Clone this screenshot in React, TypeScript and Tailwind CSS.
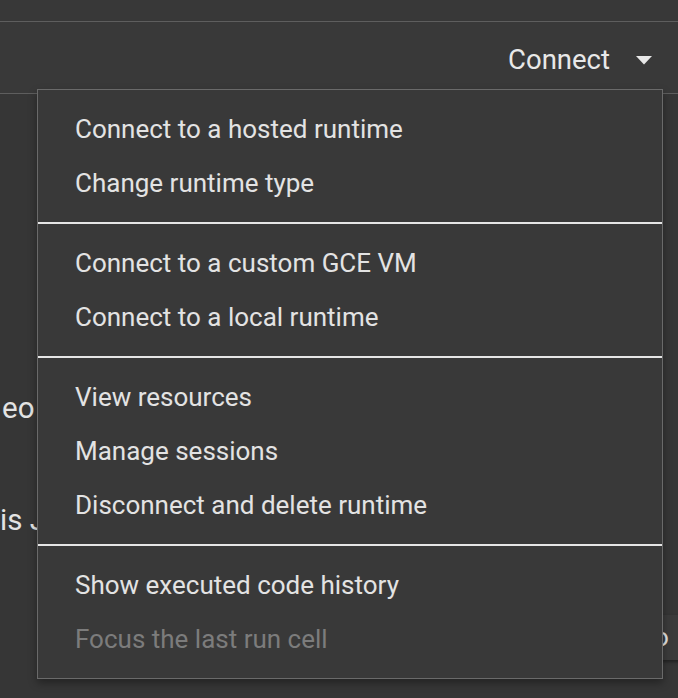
const groups: { label: string; disabled?: boolean }[][] = [
  [{ label: "Connect to a hosted runtime" }, { label: "Change runtime type" }],
  [{ label: "Connect to a custom GCE VM" }, { label: "Connect to a local runtime" }],
  [
    { label: "View resources" },
    { label: "Manage sessions" },
    { label: "Disconnect and delete runtime" },
  ],
  [
    { label: "Show executed code history" },
    { label: "Focus the last run cell", disabled: true },
  ],
];

function ConnectMenu() {
  return (
    <div className="absolute left-[37px] top-[89px] w-[626px] border-[1.5px] border-[#6a6a6a] bg-[#393939] shadow-[0_4px_8px_rgba(0,0,0,0.35)]">
      {groups.map((group, gi) => (
        <div key={gi}>
          {gi > 0 ? <div className="h-[2px] bg-[#e6e6e6]" /> : null}
          <div className="py-3">
            {group.map((item) => (
              <div
                key={item.label}
                className={
                  "flex h-[54px] items-center pl-[37px] text-[26px] " +
                  (item.disabled ? "text-[#7c7c7c]" : "text-[#e3e3e3]")
                }
              >
                {item.label}
              </div>
            ))}
          </div>
        </div>
      ))}
    </div>
  );
}

export default function App() {
  return (
    <div
      className="relative h-[698px] w-[678px] overflow-hidden bg-[#363636]"
      style={{ fontFamily: "Roboto, 'Liberation Sans', sans-serif" }}
    >
      <div className="h-[22px] border-b-[1.5px] border-[#5e5e5e] bg-[#383838]" />
      <div className="flex h-[72px] items-center justify-end border-b-[1.5px] border-[#5e5e5e] bg-[#393939] pr-[26px] pt-[4px]">
        <span className="text-[27.5px] text-[#e8e8e8]">Connect</span>
        <svg width="16" height="9" viewBox="0 0 16 9" className="ml-[26px] mt-[2px]">
          <path d="M0 0 L16 0 L8 8.5 Z" fill="#e8e8e8" />
        </svg>
      </div>
      <div className="pl-[2px] pt-[297px] text-[29.5px] text-[#e3e3e3]">
        <div className="leading-[34px]">eo</div>
        <div className="ml-[-2px] mt-[78px] leading-[34px]">is J</div>
      </div>
      <div className="absolute left-[654px] top-[615px] flex h-[45px] w-[30px] items-center bg-[#3b3b3b] text-[26px] text-[#e3e3e3] shadow-[0_2px_3px_rgba(0,0,0,0.4)]">
        <span>o</span>
      </div>
      <ConnectMenu />
    </div>
  );
}
